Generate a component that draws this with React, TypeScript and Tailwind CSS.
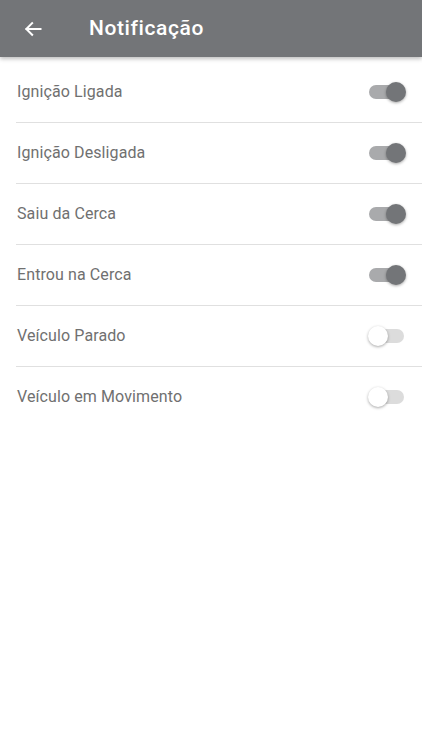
import React, { useState } from 'react';

const items = [
  { label: 'Ignição Ligada', on: true },
  { label: 'Ignição Desligada', on: true },
  { label: 'Saiu da Cerca', on: true },
  { label: 'Entrou na Cerca', on: true },
  { label: 'Veículo Parado', on: false },
  { label: 'Veículo em Movimento', on: false },
];

const Toggle: React.FC<{ on: boolean; onClick: () => void }> = ({ on, onClick }) => (
  <button onClick={onClick} className="relative w-[40px] h-[22px] flex items-center">
    <span className={`absolute left-[3px] right-[2px] h-[14px] rounded-full ${on ? 'bg-[#a9aaac]' : 'bg-[#dcdcdc]'}`} />
    <span
      className={`absolute top-[1px] w-[20px] h-[20px] rounded-full shadow-[0_1px_3px_rgba(0,0,0,0.35)] ${
        on ? 'left-[20px] bg-[#737578]' : 'left-[2px] bg-white'
      }`}
    />
  </button>
);

export default function App() {
  const [state, setState] = useState(items.map((i) => i.on));

  return (
    <div className="w-[422px] h-[750px] bg-white font-['Roboto',sans-serif]">
      {/* Header */}
      <div className="h-[57px] bg-[#737578] flex items-center shadow-[0_2px_4px_rgba(0,0,0,0.25)] relative z-10">
        <button className="w-[66px] pl-[23px] flex items-center">
          <svg width="20" height="20" viewBox="0 0 24 24" fill="none" stroke="white" strokeWidth="2.4" strokeLinecap="square">
            <path d="M21 12H4M11 5l-7 7 7 7" />
          </svg>
        </button>
        <h1 className="ml-[23px] text-white text-[21px] font-medium tracking-[0.6px]">Notificação</h1>
      </div>

      {/* List */}
      <div className="pt-[5px]">
        {items.map((item, index) => (
          <div key={item.label} className="pl-4">
            <div className="h-[60px] flex items-center justify-between pr-[16px]">
              <span className="ml-px text-[16px] tracking-[0.1px] text-[#707070]">{item.label}</span>
              <Toggle
                on={state[index]}
                onClick={() => setState((s) => s.map((v, i) => (i === index ? !v : v)))}
              />
            </div>
            {index < items.length - 1 && <div className="h-px bg-[#e0e0e0]" />}
          </div>
        ))}
      </div>
    </div>
  );
}
